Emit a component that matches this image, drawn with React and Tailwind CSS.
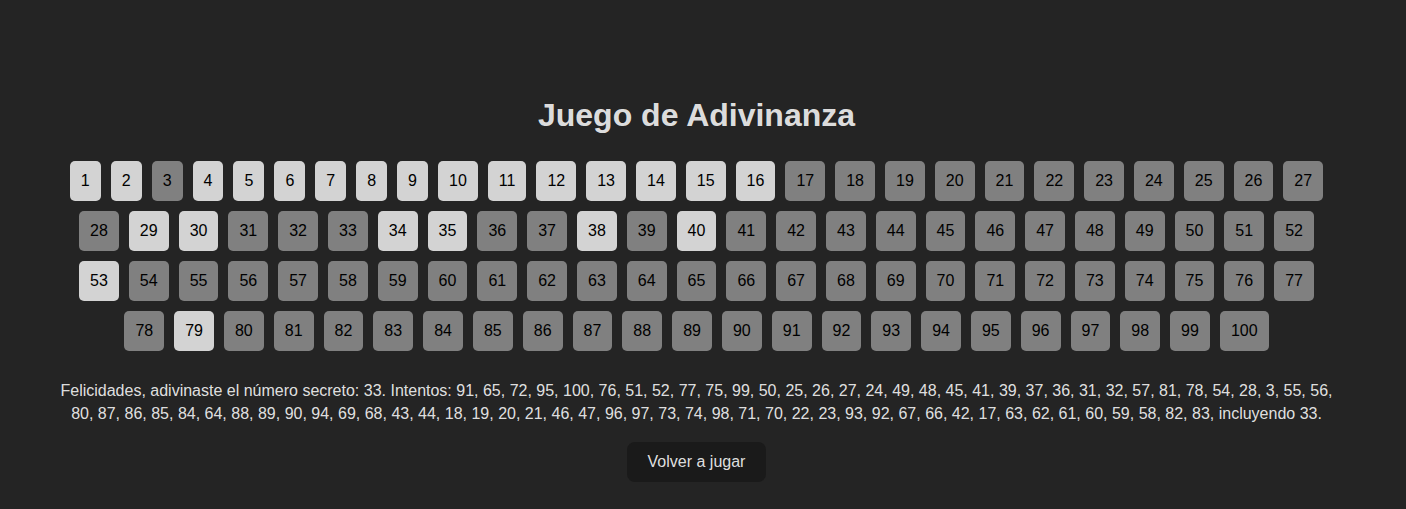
import React from "react";

const light = new Set([1, 2, 4, 5, 6, 7, 8, 9, 10, 11, 12, 13, 14, 15, 16, 29, 30, 34, 35, 38, 40, 53, 79]);
const nums = Array.from({ length: 100 }, (_, i) => i + 1);

export default function App() {
  return (
    <div
      className="min-h-screen bg-[#242424] text-[rgba(255,255,255,0.87)] flex flex-col items-center pt-[97px] pr-[13px]"
      style={{ fontFamily: '"Liberation Sans", Arial, sans-serif' }}
    >
      <h1 className="text-[32px] leading-[37px] font-bold m-0">Juego de Adivinanza</h1>
      <div className="w-[1280px] mt-[27px] flex flex-wrap justify-center gap-[10px]">
        {nums.map((n) => (
          <button
            key={n}
            className={`h-10 px-[11px] rounded-[5px] text-[16px] leading-[18px] text-black flex items-center justify-center ${
              light.has(n) ? "bg-[#d3d3d3]" : "bg-[#808080]"
            }`}
          >
            {n}
          </button>
        ))}
      </div>
      <p className="w-[1280px] mt-[28px] text-center text-[16px] leading-[23px]">
        Felicidades, adivinaste el número secreto: 33. Intentos: 91, 65, 72, 95, 100, 76, 51, 52, 77, 75, 99, 50, 25, 26, 27, 24, 49, 48, 45, 41, 39, 37, 36, 31, 32, 57, 81, 78, 54, 28, 3, 55, 56, 80, 87, 86, 85, 84, 64, 88, 89, 90, 94, 69, 68, 43, 44, 18, 19, 20, 21, 46, 47, 96, 97, 73, 74, 98, 71, 70, 22, 23, 93, 92, 67, 66, 42, 17, 63, 62, 61, 60, 59, 58, 82, 83, incluyendo 33.
      </p>
      <button className="mt-[17px] px-[19.2px] py-[9.6px] border border-transparent rounded-lg bg-[#1a1a1a] text-[16px] leading-[18.4px] font-medium text-[rgba(255,255,255,0.87)]">
        Volver a jugar
      </button>
    </div>
  );
}
